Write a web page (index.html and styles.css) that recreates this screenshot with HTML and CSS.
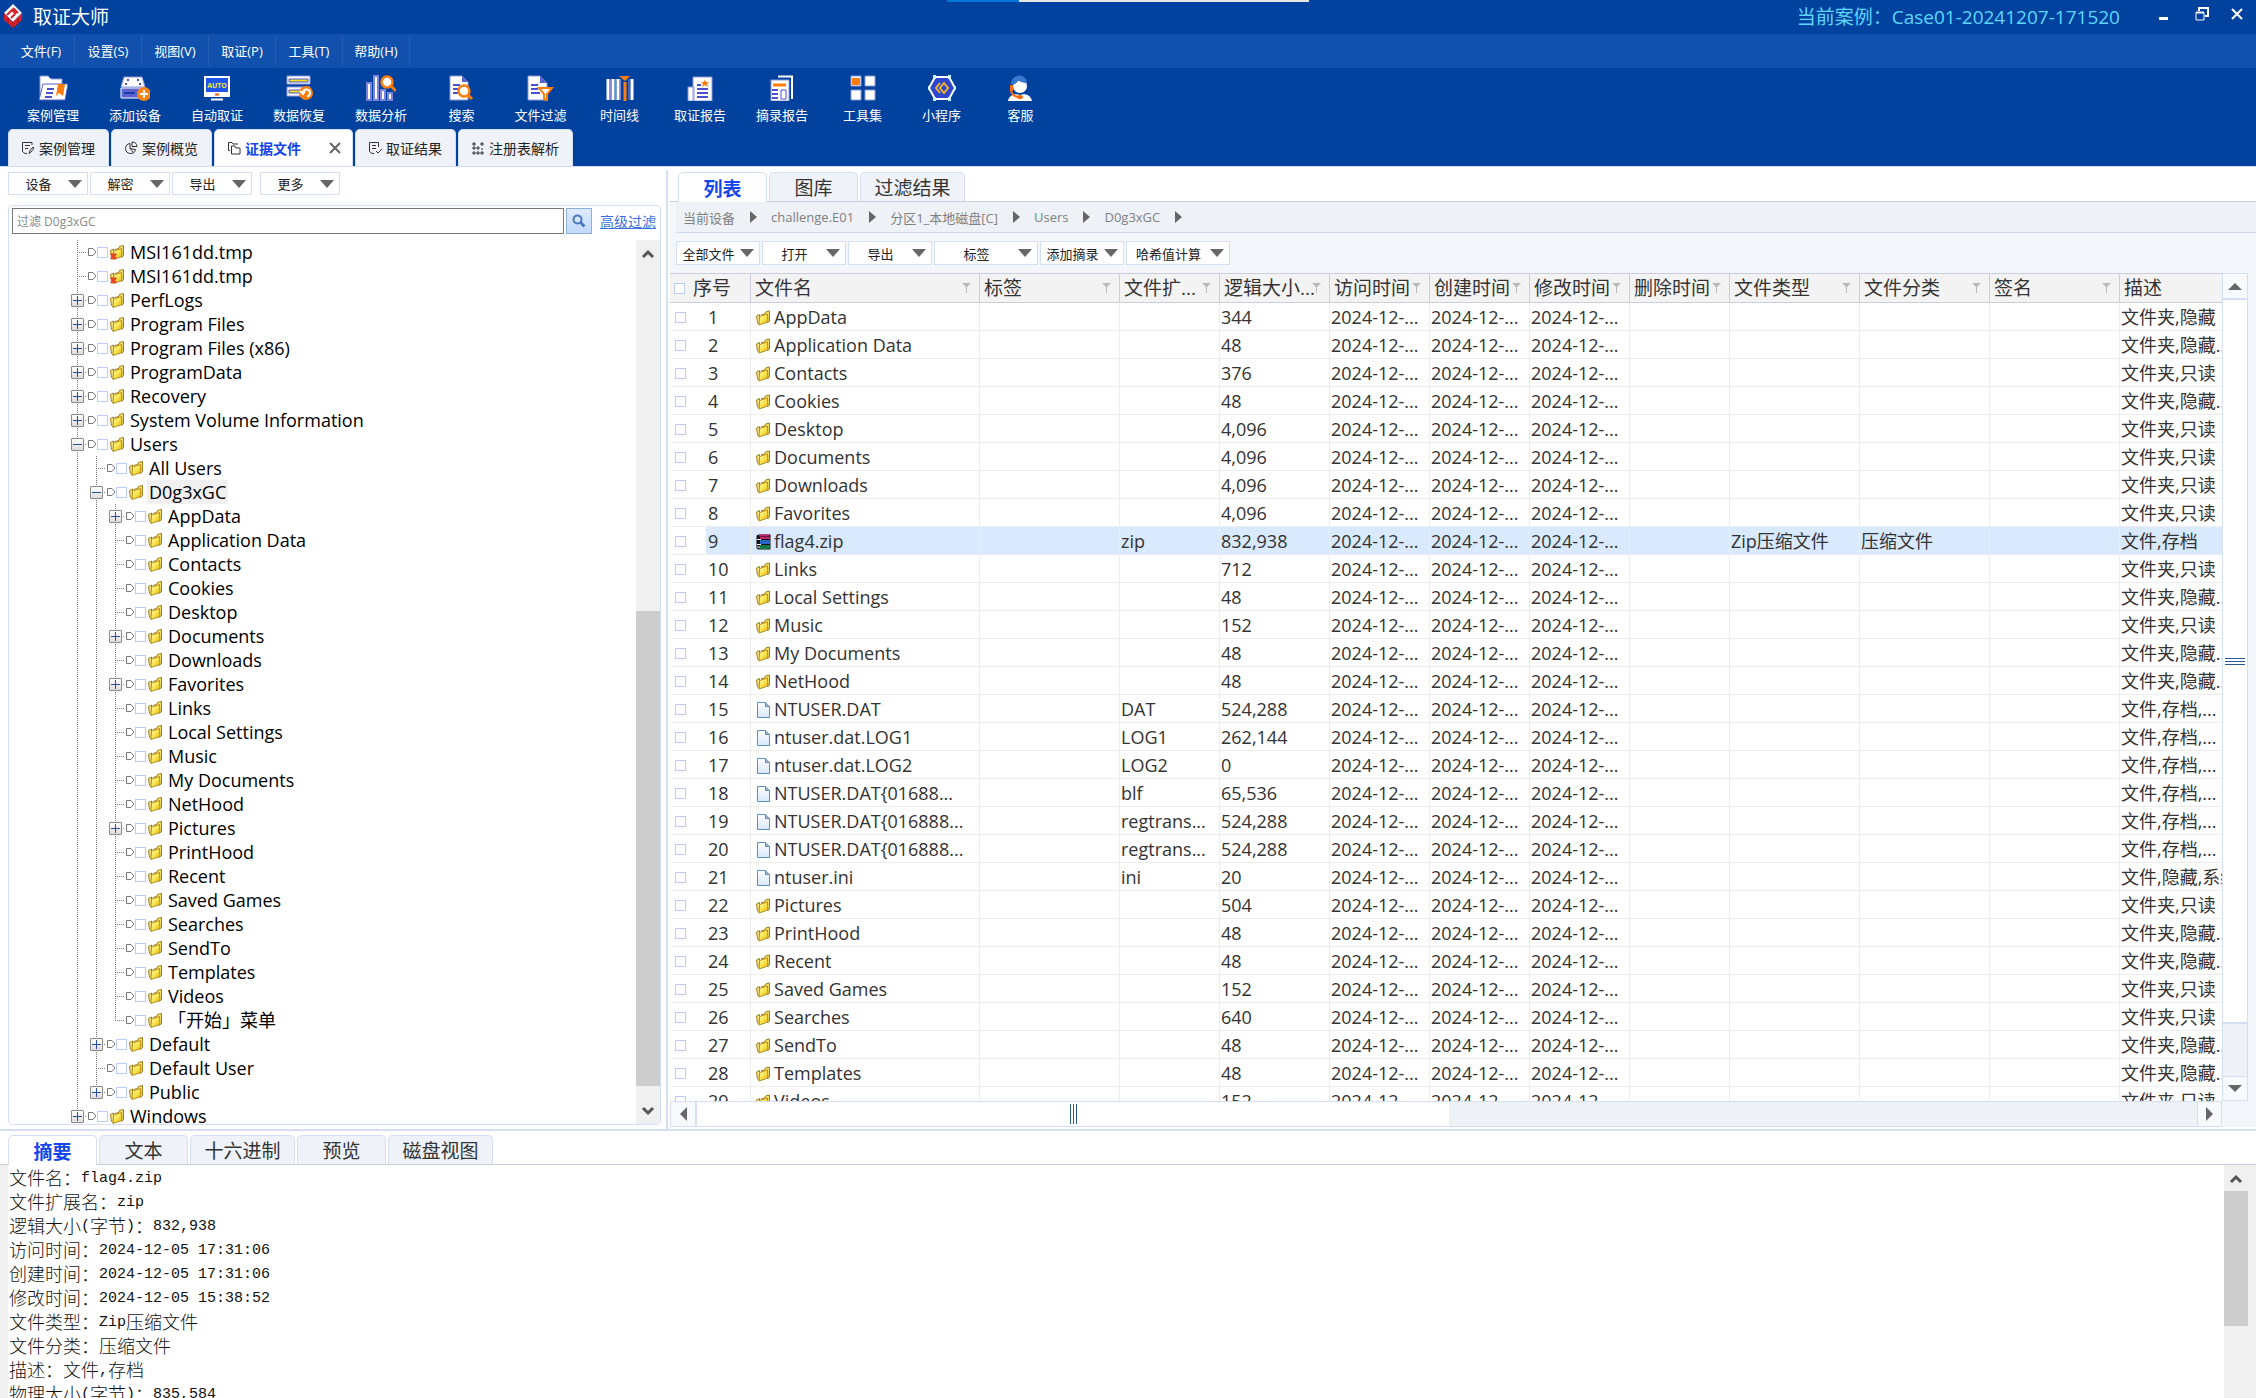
FILE: index.html
```html
<!DOCTYPE html>
<html lang="zh-CN">
<head>
  <meta charset="UTF-8" />
  <title>取证大师</title>
  <link rel="stylesheet" href="styles.css">
</head>
<body>

  <!-- shared icons -->
  <svg class="defs" aria-hidden="true">
    <linearGradient id="gold" x1="0" y1="0" x2="1" y2="1">
      <stop offset="0" stop-color="#fffbc0" />
      <stop offset="0.5" stop-color="#fbe54a" />
      <stop offset="1" stop-color="#d9a514" />
    </linearGradient>
    <linearGradient id="paper" x1="0" y1="0" x2="0" y2="1">
      <stop offset="0" stop-color="#ffffff" />
      <stop offset="1" stop-color="#d6e8fa" />
    </linearGradient>
    <symbol id="folder" viewBox="0 0 15 15">
      <path d="M5 4.500L8.500 3.500L9.500 1.500L13.500 0.500V10.500L11.500 12.500" fill="#f3df6c" stroke="#a17c1c" />
      <path d="M0.500 5.500L3.500 4V14L1.500 12.500Z" fill="#f6e88c" stroke="#a17c1c" />
      <path d="M3.500 6L11.500 3.500L12 11.500L3 14.500Z" fill="url(#gold)" stroke="#b58e20" />
    </symbol>
    <symbol id="deleted" viewBox="0 0 15 15">
      <use href="#folder" width="15" height="15" />
      <path d="M1 8.500L6 14M6 8.500L1 14" stroke="#e2451f" stroke-width="2.500" />
    </symbol>
    <symbol id="file" viewBox="0 0 15 16">
      <path d="M1.500 0.500H9.500L13.500 4.500V15.500H1.500Z" fill="url(#paper)" stroke="#5b8fc4" />
      <path d="M9.500 0.500V4.500H13.500" fill="#9ab4cc" stroke="#6f8ba8" />
    </symbol>
    <symbol id="zip" viewBox="0 0 15 16">
      <path d="M0.500 1.500L3 0.500H14.500V15.500H2L0.500 14Z" fill="#111" />
      <path d="M3 1.500H13M4 4H14" stroke="#c2206c" stroke-width="2" />
      <path d="M4 7H14M4 9H14" stroke="#2a63c8" stroke-width="2" />
      <path d="M4 12H14M3 14H14" stroke="#159a54" stroke-width="1.500" />
      <path d="M1 5.500H5M1 10.500H5M1 13H4" stroke="#fff" />
    </symbol>
    <symbol id="funnel" viewBox="0 0 9 10">
      <path d="M0 0H9L5 4V10H4V4Z" fill="#b9b9b9" />
    </symbol>
  </svg>

  <header class="header">
    <div class="progress"></div>
    <div class="titlebar">
      <svg width="20" height="26" viewBox="0 0 20 26">
        <path d="M10 1L19 10L10 19L1 10Z" fill="#fff" />
        <path d="M1 10V17L10 25L19 17V10L10 19Z" fill="#d8202a" />
        <path d="M4 12L9 7L13 11M8 15L12 11M10 5L15 10" stroke="#d8202a" stroke-width="2" fill="none" />
        <path d="M10 19V25M5 15V20M15 15V20" stroke="#8d1b22" />
      </svg>
      <h1>取证大师</h1>
      <span class="case">当前案例：Case01-20241207-171520</span>
      <button class="win" aria-label="最小化"><svg width="14" height="14" viewBox="0 0 14 14"><path d="M2 11.500H11" stroke="#fff" stroke-width="3" /></svg></button>
      <button class="win" aria-label="还原"><svg width="14" height="14" viewBox="0 0 14 14"><path d="M4 4V1H13V9H10" stroke="#fff" stroke-width="2" fill="none" /><path d="M1 5.500H9V13H1Z" stroke="#fff" fill="none" /><path d="M1 5.500H9" stroke="#fff" stroke-width="2" /></svg></button>
      <button class="win" aria-label="关闭"><svg width="14" height="14" viewBox="0 0 14 14"><path d="M2 2L12 12M12 2L2 12" stroke="#fff" stroke-width="2" /></svg></button>
    </div>

    <nav class="menubar">
      <button>文件(F)</button>
      <button>设置(S)</button>
      <button>视图(V)</button>
      <button>取证(P)</button>
      <button>工具(T)</button>
      <button>帮助(H)</button>
    </nav>

    <div class="toolbar">
      <button class="wide">
        <svg viewBox="0 0 30 26"><path d="M2 25V1H10L13 4H24V9" fill="#fff" stroke="#8f97dd" /><path d="M5 9H30L27 25H1Z" fill="#fff" stroke="#5a62c8" /><path d="M9 14H16M8 18H15M7 22H14" stroke="#4a50d0" stroke-width="2" /><path d="M20 9H27L25 21L21 18L18 21Z" fill="#ff7b0a" /></svg>
        案例管理
      </button>
      <button class="wide">
        <svg viewBox="0 0 30 26"><path d="M4 2H22L25 12H1Z" fill="#fff" stroke="#8f97dd" /><path d="M1 13H25V23H1Z" fill="#5b63cf" stroke="#fff" /><path d="M4 18H15" stroke="#1a3aa8" stroke-width="2" /><path d="M7 5H9M17 5H19M5 9H7M19 9H21" stroke="#4a50d0" stroke-width="2" /><circle cx="24" cy="19" r="7" fill="#ff8412" /><path d="M24 15V23M20 19H28" stroke="#fff" stroke-width="2" /></svg>
        添加设备
      </button>
      <button class="wide">
        <svg viewBox="0 0 30 26"><path d="M2 1H28V22H2Z" fill="#fff" /><path d="M4 3H26V17H4Z" fill="#1f55e8" /><text x="15" y="13" text-anchor="middle" class="auto">AUTO</text><path d="M13 19.500H17" stroke="#ff5a00" stroke-width="2" /><path d="M9 24.500H21" stroke="#fff" stroke-width="2" /></svg>
        自动取证
      </button>
      <button class="wide">
        <svg viewBox="0 0 30 26"><path d="M3 1H26V9H3ZM3 12H26V21H3Z" fill="#fff" stroke="#8f97dd" /><path d="M5 4H24V7H5ZM5 15H20V18H5Z" fill="#f1df28" stroke="#4a50d0" /><circle cx="22" cy="18" r="7" fill="#ff7b0a" /><path d="M19 18A3.500 3.500 0 1 1 23 21.500M16 16L19 19L21 16" stroke="#fff" stroke-width="2" fill="none" /></svg>
        数据恢复
      </button>
      <button class="wide">
        <svg viewBox="0 0 30 26"><path d="M1 8H5V25H1ZM8 1H12V25H8ZM15 15H19V25H15ZM22 18H26V25H22Z" fill="#fff" stroke="#7b83dc" stroke-width="2" /><circle cx="21" cy="7" r="5.500" fill="#fff" stroke="#ff7b0a" stroke-width="2.500" /><path d="M25 11L30 16" stroke="#ff7b0a" stroke-width="3" /></svg>
        数据分析
      </button>
      <button>
        <svg viewBox="0 0 30 26"><path d="M3 1H15L21 7V25H3Z" fill="#fff" stroke="#8f97dd" /><path d="M15 1V7H21" fill="#5a62c8" /><path d="M6 10H13M6 14H11M6 18H11" stroke="#4a50d0" stroke-width="2" /><circle cx="17" cy="16" r="5.500" fill="#fff" stroke="#ff7b0a" stroke-width="2.500" /><path d="M21 20L25 24" stroke="#ff7b0a" stroke-width="3" /></svg>
        搜索
      </button>
      <button>
        <svg viewBox="0 0 30 26"><path d="M2 1H14L21 8V25H2Z" fill="#fff" stroke="#8f97dd" /><path d="M14 1V8H21" fill="#5a62c8" /><path d="M5 10H12M5 14H12M5 18H14" stroke="#4a50d0" stroke-width="2" /><path d="M13 13H26L21 19V26L18 24V19Z" fill="#fff" stroke="#ff7b0a" stroke-width="2" /></svg>
        文件过滤
      </button>
      <button>
        <svg viewBox="0 0 30 26"><path d="M3 4V25M8 4V25M13 4V25M27 4V25" stroke="#fff" stroke-width="3" /><path d="M5.500 4V25M10.500 4V25M15.500 4V25M24 4V25" stroke="#7b83dc" stroke-width="1" /><path d="M20 7V26" stroke="#ff7b0a" stroke-width="3" /><path d="M14 1H25L20 6Z" fill="#ff7b0a" /></svg>
        时间线
      </button>
      <button class="wide">
        <svg viewBox="0 0 30 26"><path d="M3 12H9V26H3ZM8 2H27V26H8Z" fill="#fff" stroke="#8f97dd" /><path d="M12 10H16M12 14H23M12 18H23M12 22H23" stroke="#4a50d0" stroke-width="2" /><path d="M20 4L21 7H24L22 9L23 12L20 10L17 12L18 9L16 7H19Z" fill="#ff7b0a" /></svg>
        取证报告
      </button>
      <button class="wide">
        <svg viewBox="0 0 30 26"><path d="M11 1.500H25V24" fill="none" stroke="#fff" stroke-width="2" /><path d="M4 5H22V26H4Z" fill="#fff" stroke="#8f97dd" /><path d="M6 10H19" stroke="#ff7b0a" stroke-width="3" /><path d="M5 15H11M5 19H11M5 23H11" stroke="#4a50d0" stroke-width="2" /><path d="M14 15H19V24H14Z" fill="#fff" stroke="#4a50d0" /></svg>
        摘录报告
      </button>
      <button>
        <svg viewBox="0 0 30 26"><path d="M3 1H13V11H3ZM17 1H27V11H17ZM3 15H13V25H3ZM17 15H27V25H17Z" fill="#fff" stroke="#8f97dd" /><path d="M4 3H12V10H4Z" fill="#ff7b0a" /></svg>
        工具集
      </button>
      <button>
        <svg viewBox="0 0 30 26"><path d="M8 2H22L28 13L22 24H8L2 13Z" fill="#2f45cf" stroke="#fff" stroke-width="2" /><path d="M13 8L9 13L13 18M17 8L13 13L17 18L21 13Z" fill="none" stroke="#f0b429" stroke-width="2" /><path d="M6 2H9M21 2H24M6 24H9M21 24H24M1 13H3M27 13H29" stroke="#c8f3ff" stroke-width="4" /></svg>
        小程序
      </button>
      <button>
        <svg viewBox="0 0 30 26"><circle cx="14" cy="11" r="7" fill="#fff" /><path d="M5 9C6 -2 20 -2 21 8C16 8 14 6 12 6C10 9 8 10 5 9Z" fill="#3a78d0" /><path d="M2 26C3 20 9 18 14 20C20 18 25 21 26 26Z" fill="#fff" /><path d="M4 10H7V16H4Z" fill="#ff6a10" /><path d="M5 16C6 20 9 22 14 22" fill="none" stroke="#ff6a10" stroke-width="2" /><ellipse cx="14" cy="22" rx="3" ry="2" fill="#ff6a10" /></svg>
        客服
      </button>
    </div>

    <div class="doc-tabs">
      <button><svg viewBox="0 0 14 14"><path d="M11 4V1.500H1.500V10.500L4 12.500H6M4 4.500H9M4 7.500H7M8 12.500L9 9.500L12 6L13 7L10 11Z" /></svg>案例管理</button>
      <button><svg viewBox="0 0 14 14"><path d="M6 2.500A5 5 0 1 0 11.500 8.500L6 7.500ZM8 1V5.500H13A5 5 0 0 0 8 1ZM6 7.500L10 12" /></svg>案例概览</button>
      <button class="active"><svg viewBox="0 0 14 14"><path d="M3 9.500H1.500V1.500H5L6 3H11M4.500 5H8L9 7H13V13H4.500Z" /></svg>证据文件<svg class="close" viewBox="0 0 14 14"><path d="M2 2L12 12M12 2L2 12" /></svg></button>
      <button><svg viewBox="0 0 14 14"><path d="M10.500 6V1.500H1.500V10.500L4 12.500H6M4 4.500H8M4 7.500H8M8 10L10 12L14 8" /></svg>取证结果</button>
      <button class="roomy"><svg viewBox="0 0 14 14"><path d="M2 2H4V4H2ZM2 6H4V8H2ZM2 11H4V13H2ZM6 11H8V13H6ZM6 6H8V8H6ZM10 11H12V13H10ZM11 1V5M9 3H13M10 8H12" /></svg>注册表解析</button>
    </div>
  </header>

  <main class="main">
    <section class="left">
      <div class="drops">
        <button class="drop">设备</button>
        <button class="drop">解密</button>
        <button class="drop">导出</button>
        <button class="drop more">更多</button>
      </div>
      <div class="panel">
        <form class="filter">
          <input type="text" placeholder="过滤 D0g3xGC" aria-label="过滤" />
          <button type="button" aria-label="搜索"><svg width="14" height="14" viewBox="0 0 14 14"><circle cx="5.500" cy="5.500" r="4" fill="none" stroke="#4a78b8" stroke-width="2" /><path d="M8.500 8.500L12.500 12.500" stroke="#4a78b8" stroke-width="3" /></svg></button>
          <a href="#">高级过滤</a>
        </form>
        <div class="tree-box">
          <div class="tree" id="tree"></div>
          <div class="scroll">
            <svg viewBox="0 0 24 26"><path d="M7 17L12 12L17 17" /></svg>
            <div class="tree-thumb"></div>
            <svg viewBox="0 0 24 26"><path d="M7 10L12 15L17 10" /></svg>
          </div>
        </div>
      </div>
    </section>

    <section class="right">
      <div class="tabs">
        <button class="active">列表</button>
        <button>图库</button>
        <button class="three">过滤结果</button>
      </div>
      <nav class="crumbs">
        <a href="#">当前设备</a>
        <a href="#">challenge.E01</a>
        <a href="#">分区1_本地磁盘[C]</a>
        <a href="#">Users</a>
        <a href="#">D0g3xGC</a>
      </nav>
      <div class="drops tools">
        <button class="drop">全部文件</button>
        <button class="drop">打开</button>
        <button class="drop">导出</button>
        <button class="drop long">标签</button>
        <button class="drop">添加摘录</button>
        <button class="drop long">哈希值计算</button>
      </div>
      <div class="grid">
        <div class="viewport">
          <table>
            <colgroup>
              <col class="c-check"><col class="c-num"><col class="c-name"><col class="c-tag"><col class="c-ext"><col class="c-size">
              <col class="c-time"><col class="c-time"><col class="c-time"><col class="c-time">
              <col class="c-type"><col class="c-type"><col class="c-type"><col class="c-type">
            </colgroup>
            <thead>
              <tr>
                <th colspan="2"><div class="no"><input type="checkbox" aria-label="全选" />序号</div></th>
                <th><div><span>文件名</span><svg><use href="#funnel" /></svg></div></th>
                <th><div><span>标签</span><svg><use href="#funnel" /></svg></div></th>
                <th><div><span>文件扩...</span><svg><use href="#funnel" /></svg></div></th>
                <th><div><span>逻辑大小...</span><svg><use href="#funnel" /></svg></div></th>
                <th><div><span>访问时间</span><svg><use href="#funnel" /></svg></div></th>
                <th><div><span>创建时间</span><svg><use href="#funnel" /></svg></div></th>
                <th><div><span>修改时间</span><svg><use href="#funnel" /></svg></div></th>
                <th><div><span>删除时间</span><svg><use href="#funnel" /></svg></div></th>
                <th><div><span>文件类型</span><svg><use href="#funnel" /></svg></div></th>
                <th><div><span>文件分类</span><svg><use href="#funnel" /></svg></div></th>
                <th><div><span>签名</span><svg><use href="#funnel" /></svg></div></th>
                <th><div><span>描述</span></div></th>
              </tr>
            </thead>
            <tbody id="rows"></tbody>
          </table>
        </div>
        <div class="vbar">
          <button aria-label="上"><i class="up"></i></button>
          <div class="vthumb"><svg width="20" height="7" viewBox="0 0 20 7"><path d="M0 0.500H20M0 3.500H20M0 6.500H20" stroke="#2b5a96" /></svg></div>
          <button aria-label="下"><i class="down"></i></button>
        </div>
        <div class="hbar">
          <button aria-label="左"><i class="prev"></i></button>
          <div class="hthumb"><svg width="7" height="20" viewBox="0 0 7 20"><path d="M0.500 0V20M3.500 0V20M6.500 0V20" stroke="#2b5a96" /></svg></div>
          <button aria-label="右"><i class="next"></i></button>
        </div>
      </div>
    </section>
  </main>

  <section class="bottom">
    <div class="tabs">
      <button class="active">摘要</button>
      <button>文本</button>
      <button class="three">十六进制</button>
      <button>预览</button>
      <button class="three">磁盘视图</button>
    </div>
    <div class="summary">
      <div class="lines">
        <p>文件名：<span>flag4.zip</span></p>
        <p>文件扩展名：<span>zip</span></p>
        <p>逻辑大小<span>(</span>字节<span>)</span>：<span>832,938</span></p>
        <p>访问时间：<span>2024-12-05 17:31:06</span></p>
        <p>创建时间：<span>2024-12-05 17:31:06</span></p>
        <p>修改时间：<span>2024-12-05 15:38:52</span></p>
        <p>文件类型：<span>Zip</span>压缩文件</p>
        <p>文件分类：压缩文件</p>
        <p>描述：文件<span>,</span>存档</p>
        <p>物理大小<span>(</span>字节<span>)</span>：<span>835,584</span></p>
      </div>
      <div class="scroll">
        <svg viewBox="0 0 24 26"><path d="M7 17L12 12L17 17" /></svg>
        <div class="sum-thumb"></div>
      </div>
    </div>
  </section>

  <script src="script.js"></script>
</body>
</html>
```
FILE: styles.css
```css
* {
  box-sizing: border-box;
}
body {
  margin: 0;
  height: 100vh;
  display: flex;
  flex-direction: column;
  overflow: hidden;
  background: #fff;
  color: #333;
  font-family: "Open Sans", "Noto Sans CJK SC", sans-serif;
  font-size: 13px;
}
button {
  font: inherit;
  color: inherit;
  background: none;
  border: none;
  padding: 0;
  margin: 0;
  white-space: nowrap;
}
input[type="checkbox"] {
  appearance: none;
  flex: none;
  width: 11px;
  height: 11px;
  margin: 0;
  border: 1px solid #b9cdf8;
  background: #fff;
}
.defs {
  position: absolute;
  width: 0;
  height: 0;
}

/* header */
.header {
  position: relative;
  flex: none;
  background: #00429e;
  color: #fff;
  border-bottom: 1px solid #d5dff2;
}
.progress {
  position: absolute;
  top: 0;
  left: 0;
  right: 0;
  width: 362px;
  height: 2px;
  margin: 0 auto;
  background: linear-gradient(90deg, #0078d7 20%, #e6e6e6 20%);
}
.titlebar {
  display: flex;
  align-items: center;
  height: 34px;
  padding-left: 3px;
  padding-right: 3px;
  padding-bottom: 2px;
}
.titlebar h1 {
  flex: 1;
  margin: 0 0 0 10px;
  font-size: 19px;
  font-weight: 400;
}
.case {
  color: #5fd6ff;
  font-size: 19px;
  margin-right: 25px;
}
.win {
  width: 38px;
  height: 28px;
}
.win:last-child {
  width: 32px;
}
.menubar {
  display: flex;
  height: 34px;
  padding: 2px 0 2px 8px;
  background: #1151ad;
}
.menubar button {
  width: 67px;
  padding-bottom: 2px;
  border-right: 1px solid #2360b5;
}
.toolbar {
  display: flex;
  height: 61px;
  padding: 7px 0 0 12px;
}
.toolbar button {
  display: flex;
  flex-direction: column;
  align-items: center;
  gap: 4px;
  width: 79px;
  line-height: 20px;
}
.toolbar .wide {
  width: 82px;
}
.toolbar svg {
  width: 30px;
  height: 26px;
}
.auto {
  font-size: 7px;
  font-weight: 700;
  fill: #f4e53a;
}
.doc-tabs {
  display: flex;
  gap: 2px;
  padding-left: 8px;
}
.doc-tabs button {
  display: flex;
  align-items: center;
  gap: 4px;
  height: 37px;
  width: 101px;
  padding-left: 12px;
  font-size: 14px;
  color: #222;
  background: #eff3f9;
  border: 1px solid #d5dff2;
  border-bottom: none;
  border-radius: 5px 5px 0 0;
}
.doc-tabs .active {
  width: 139px;
  color: #1546ec;
  font-weight: 700;
  background: #fff;
}
.doc-tabs .roomy {
  width: 115px;
}
.doc-tabs svg {
  flex: none;
  width: 14px;
  height: 14px;
  fill: none;
  stroke: #333;
}
.doc-tabs .close {
  margin-left: auto;
  margin-right: 10px;
  stroke: #666;
  stroke-width: 2;
}

/* dropdown buttons */
.drops {
  display: flex;
  gap: 2px;
}
.drop {
  display: flex;
  align-items: center;
  width: 80px;
  height: 23px;
  color: #222;
  background: #fff;
  border: 1px solid #d5dff2;
  padding-right: 5px;
  justify-content: center;
}
.drop::after {
  content: "";
  margin-left: auto;
  border: 7px solid transparent;
  border-top: 8px solid #666;
  border-bottom: none;
}
.drop::before {
  content: "";
  margin-left: auto;
}
.more {
  margin-left: 6px;
}

/* main area */
.main {
  flex: 1;
  min-height: 0;
  display: flex;
}
.left {
  flex: none;
  display: flex;
  flex-direction: column;
  gap: 10px;
  width: 668px;
  margin-top: 3px;
  padding: 2px 5px 4px 8px;
  border-right: 2px solid #d5dff2;
}
.panel {
  flex: 1;
  min-height: 0;
  display: flex;
  flex-direction: column;
  border: 1px solid #d5dff2;
  border-radius: 4px;
}
.filter {
  display: flex;
  align-items: center;
  gap: 2px;
  padding: 2px 4px 6px 3px;
}
.filter input {
  flex: 1;
  height: 26px;
  padding: 0 4px;
  border: 1px solid #777;
  font: inherit;
  font-size: 12px;
}
.filter input::placeholder {
  color: #888;
}
.filter button {
  width: 26px;
  height: 26px;
  border: 1px solid #8db0d8;
  background: linear-gradient(#deebfd, #c2dafb);
}
.filter button svg {
  display: block;
  margin: 0 auto;
}
.filter a {
  margin-left: 6px;
  font-size: 14px;
  color: #3b6fdc;
}
.tree-box {
  flex: 1;
  min-height: 0;
  display: flex;
}
.tree {
  flex: 1;
  overflow: hidden;
  padding-left: 59px;
  font-size: 18px;
  color: #000;
}
.node {
  display: flex;
  align-items: center;
  height: 24px;
  line-height: 24px;
}
.guide, .joint {
  flex: none;
  display: flex;
  align-items: center;
  width: 19px;
  height: 24px;
  padding-left: 3px;
  background: repeating-linear-gradient(#777 0 1px, transparent 1px 2px) 9px 0 / 1px 100% no-repeat;
}
.joint {
  background:
    repeating-linear-gradient(#777 0 1px, transparent 1px 2px) 9px 0 / 1px 100% no-repeat,
    repeating-linear-gradient(90deg, #777 0 1px, transparent 1px 2px) 9px 12px / 10px 1px no-repeat;
}
.last .joint {
  background-size: 1px 12px, 10px 1px;
}
.joint button {
  width: 13px;
  height: 13px;
  border: 1px solid #8a8a8a;
  border-radius: 1px;
  background:
    linear-gradient(#2b4f9e, #2b4f9e) 1px 5px / 9px 1px no-repeat,
    linear-gradient(#fff, #dcdcdc);
}
.joint .plus {
  background:
    linear-gradient(#2b4f9e, #2b4f9e) 1px 5px / 9px 1px no-repeat,
    linear-gradient(#2b4f9e, #2b4f9e) 5px 1px / 1px 9px no-repeat,
    linear-gradient(#fff, #dcdcdc);
}
.node svg {
  flex: none;
}
.node .pic {
  width: 15px;
  height: 15px;
  margin: 0 3px 0 2px;
}
.node .name {
  padding: 0 2px;
}
.node.current .name {
  background: #f0f0f0;
}
.scroll {
  flex: none;
  display: flex;
  flex-direction: column;
  width: 24px;
  background: #f0f0f0;
}
.scroll svg {
  width: 24px;
  height: 26px;
  fill: none;
  stroke: #555;
  stroke-width: 3;
}
.tree-thumb {
  width: 24px;
  height: 475px;
  margin-top: auto;
  margin-bottom: 12px;
  background: #cdcdcd;
}

/* file list */
.right {
  flex: 1;
  min-width: 0;
  display: flex;
  flex-direction: column;
  margin-left: 2px;
  margin-bottom: 2px;
  background: #f3f6fb;
}
.tabs {
  display: flex;
  gap: 2px;
  height: 35px;
  padding: 5px 8px 0;
  background: #fff;
  border-bottom: 1px solid #cbcddd;
}
.tabs button {
  width: 89px;
  height: 29px;
  font-size: 19px;
  background: #eff3f9;
  border: 1px solid #d5dff2;
  border-bottom: none;
  border-radius: 5px 5px 0 0;
}
.tabs .three {
  width: 105px;
}
.tabs .active {
  height: 30px;
  color: #1546ec;
  font-weight: 700;
  background: #fff;
}
.crumbs {
  display: flex;
  align-items: center;
  height: 31px;
  margin-left: 6px;
  padding-left: 7px;
  background: #eef2f7;
  border-bottom: 1px solid #d0dcf0;
}
.crumbs a {
  display: flex;
  align-items: center;
  color: #808080;
  text-decoration: none;
}
.crumbs a::after {
  content: "";
  margin: 0 14px 0 15px;
  border: 6px solid transparent;
  border-left: 7px solid #666;
  border-right: none;
}
.tools {
  padding: 8px 6px;
}
.tools .drop {
  width: 84px;
  height: 24px;
}
.tools .long {
  width: 104px;
}
.grid {
  flex: 1;
  min-height: 0;
  display: grid;
  grid-template-columns: 1fr 26px;
  grid-template-rows: 1fr 26px;
  padding-right: 8px;
}
.viewport {
  min-width: 0;
  overflow: hidden;
  background: #fff;
}
table {
  width: 1580px;
  table-layout: fixed;
  border-collapse: separate;
  border-spacing: 0;
}
.c-check { width: 36px; }
.c-num { width: 45px; }
.c-name { width: 229px; }
.c-tag { width: 140px; }
.c-ext { width: 100px; }
.c-size { width: 110px; }
.c-time { width: 100px; }
.c-type { width: 130px; }
th {
  height: 30px;
  padding: 0 0 0 4px;
  font-size: 19px;
  font-weight: 400;
  line-height: 27px;
  text-align: left;
  white-space: nowrap;
  background: #f3f3f3;
  border: 1px solid #cbcddd;
  border-left: none;
}
th div {
  display: flex;
  align-items: center;
  justify-content: space-between;
}
th svg {
  flex: none;
  width: 9px;
  height: 10px;
  margin: 0 8px 0 -8px;
}
th .no {
  justify-content: flex-start;
  gap: 8px;
}
td {
  height: 28px;
  padding: 1px 0 0 1px;
  font-size: 18px;
  line-height: 26px;
  white-space: nowrap;
  overflow: hidden;
  border-right: 1px solid #ededed;
  border-bottom: 1px solid #ededed;
}
td:nth-child(2) {
  padding-left: 2px;
}
td:first-child {
  padding-left: 5px;
  border-right: none;
}
td input[type="checkbox"] {
  display: block;
}
td svg {
  width: 15px;
  height: 16px;
  margin: 0 3px 0 4px;
  vertical-align: -2px;
}
.selected td:not(:first-child) {
  background: #d9e9fe;
}
.vbar, .hbar {
  display: flex;
  border: 1px solid #d5dff2;
  background: #eef2f7;
}
.vbar {
  flex-direction: column;
}
.vbar button, .hbar button {
  flex: none;
  display: flex;
  align-items: center;
  justify-content: center;
  width: 24px;
  height: 24px;
  background: #f7f9fc;
}
.vthumb, .hthumb {
  display: flex;
  align-items: center;
  justify-content: center;
  background: #fff;
}
.vthumb {
  flex: 0 0 726px;
  margin-bottom: auto;
  border-top: 2px solid #d5dff2;
  border-bottom: 2px solid #d5dff2;
}
.hthumb {
  flex: 0 0 754px;
  margin-right: auto;
  border-left: 2px solid #d5dff2;
}
.vbar button:last-child {
  border-top: 1px solid #d5dff2;
}
.hbar button:last-child {
  border-left: 1px solid #d5dff2;
}
.vbar i, .hbar i {
  border: 0 solid transparent;
}
.vbar .up {
  border-width: 0 7px 7px;
  border-bottom-color: #666;
}
.vbar .down {
  border-width: 7px 7px 0;
  border-top-color: #666;
}
.hbar .prev {
  border-width: 7px 7px 7px 0;
  border-right-color: #666;
}
.hbar .next {
  border-width: 7px 0 7px 7px;
  border-left-color: #666;
}

/* summary */
.bottom {
  flex: none;
  display: flex;
  flex-direction: column;
  height: 269px;
  border-top: 2px solid #d5dff2;
}
.bottom .tabs {
  flex: none;
  height: 34px;
  padding-top: 4px;
}
.summary {
  flex: 1;
  min-height: 0;
  display: flex;
  padding: 0 8px;
  background: #f0f0f0;
}
.lines {
  flex: 1;
  overflow: hidden;
  padding: 0 1px;
  background: #fff;
  color: #111;
  font-size: 18px;
}
.lines p {
  display: flex;
  align-items: center;
  margin: 0;
  height: 24px;
  font-weight: 300;
}
.lines span {
  padding-top: 3px;
  font-family: "Liberation Mono", monospace;
  font-size: 15px;
  white-space: pre;
}
.sum-thumb {
  width: 24px;
  height: 135px;
  background: #cdcdcd;
}
```
FILE: script.js
```js
// depth, name, expander, flag
const tree = [
  [0, 'MSI161dd.tmp', '', 'deleted'],
  [0, 'MSI161dd.tmp', '', 'deleted'],
  [0, 'PerfLogs', '+'],
  [0, 'Program Files', '+'],
  [0, 'Program Files (x86)', '+'],
  [0, 'ProgramData', '+'],
  [0, 'Recovery', '+'],
  [0, 'System Volume Information', '+'],
  [0, 'Users', '-'],
  [1, 'All Users', ''],
  [1, 'D0g3xGC', '-', 'current'],
  [2, 'AppData', '+'],
  [2, 'Application Data', ''],
  [2, 'Contacts', ''],
  [2, 'Cookies', ''],
  [2, 'Desktop', ''],
  [2, 'Documents', '+'],
  [2, 'Downloads', ''],
  [2, 'Favorites', '+'],
  [2, 'Links', ''],
  [2, 'Local Settings', ''],
  [2, 'Music', ''],
  [2, 'My Documents', ''],
  [2, 'NetHood', ''],
  [2, 'Pictures', '+'],
  [2, 'PrintHood', ''],
  [2, 'Recent', ''],
  [2, 'Saved Games', ''],
  [2, 'Searches', ''],
  [2, 'SendTo', ''],
  [2, 'Templates', ''],
  [2, 'Videos', ''],
  [2, '「开始」菜单', '', 'last'],
  [1, 'Default', '+'],
  [1, 'Default User', ''],
  [1, 'Public', '+', 'last'],
  [0, 'Windows', '+', 'last']
];

// icon, name, extension, size, description
const files = [
  ['folder', 'AppData', '', '344', '文件夹,隐藏'],
  ['folder', 'Application Data', '', '48', '文件夹,隐藏...'],
  ['folder', 'Contacts', '', '376', '文件夹,只读'],
  ['folder', 'Cookies', '', '48', '文件夹,隐藏...'],
  ['folder', 'Desktop', '', '4,096', '文件夹,只读'],
  ['folder', 'Documents', '', '4,096', '文件夹,只读'],
  ['folder', 'Downloads', '', '4,096', '文件夹,只读'],
  ['folder', 'Favorites', '', '4,096', '文件夹,只读'],
  ['zip', 'flag4.zip', 'zip', '832,938', '文件,存档'],
  ['folder', 'Links', '', '712', '文件夹,只读'],
  ['folder', 'Local Settings', '', '48', '文件夹,隐藏...'],
  ['folder', 'Music', '', '152', '文件夹,只读'],
  ['folder', 'My Documents', '', '48', '文件夹,隐藏...'],
  ['folder', 'NetHood', '', '48', '文件夹,隐藏...'],
  ['file', 'NTUSER.DAT', 'DAT', '524,288', '文件,存档,...'],
  ['file', 'ntuser.dat.LOG1', 'LOG1', '262,144', '文件,存档,...'],
  ['file', 'ntuser.dat.LOG2', 'LOG2', '0', '文件,存档,...'],
  ['file', 'NTUSER.DAT{01688...', 'blf', '65,536', '文件,存档,...'],
  ['file', 'NTUSER.DAT{016888...', 'regtrans...', '524,288', '文件,存档,...'],
  ['file', 'NTUSER.DAT{016888...', 'regtrans...', '524,288', '文件,存档,...'],
  ['file', 'ntuser.ini', 'ini', '20', '文件,隐藏,系统'],
  ['folder', 'Pictures', '', '504', '文件夹,只读'],
  ['folder', 'PrintHood', '', '48', '文件夹,隐藏...'],
  ['folder', 'Recent', '', '48', '文件夹,隐藏...'],
  ['folder', 'Saved Games', '', '152', '文件夹,只读'],
  ['folder', 'Searches', '', '640', '文件夹,只读'],
  ['folder', 'SendTo', '', '48', '文件夹,隐藏...'],
  ['folder', 'Templates', '', '48', '文件夹,隐藏...'],
  ['folder', 'Videos', '', '152', '文件夹,只读']
];

document.getElementById('tree').innerHTML = tree.map(([depth, name, sign, flag = '']) => `
  <div class="node ${flag}">
    ${'<span class="guide"></span>'.repeat(depth)}
    <span class="joint">${sign ? `<button class="${sign === '+' ? 'plus' : 'minus'}" aria-label="${name}"></button>` : ''}</span>
    <svg width="10" height="8" viewBox="0 0 10 8"><path d="M1.500 0.500H6L9 4L6 7.500H1.500Z" fill="#fff" stroke="#777" /></svg>
    <input type="checkbox" aria-label="${name}" />
    <svg class="pic"><use href="#${flag === 'deleted' ? 'deleted' : 'folder'}" /></svg>
    <span class="name">${name}</span>
  </div>`).join('');

document.getElementById('rows').innerHTML = files.map(([icon, name, ext, size, desc], i) => {
  const zip = icon === 'zip';
  return `<tr class="${zip ? 'selected' : ''}">
    <td><input type="checkbox" aria-label="${name}" /></td>
    <td>${i + 1}</td>
    <td><svg><use href="#${icon}" /></svg>${name}</td>
    <td></td>
    <td>${ext}</td>
    <td>${size}</td>
    <td>2024-12-...</td>
    <td>2024-12-...</td>
    <td>2024-12-...</td>
    <td></td>
    <td>${zip ? 'Zip压缩文件' : ''}</td>
    <td>${zip ? '压缩文件' : ''}</td>
    <td></td>
    <td>${desc}</td>
  </tr>`;
}).join('');
```
